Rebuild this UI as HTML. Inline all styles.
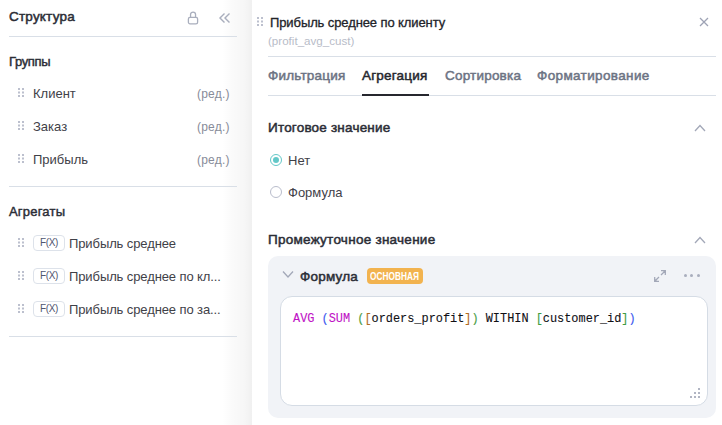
<!DOCTYPE html>
<html><head><meta charset="utf-8">
<style>
*{margin:0;padding:0;box-sizing:border-box}
html,body{width:722px;height:425px;overflow:hidden;background:#fff}
body{position:relative;font-family:"Liberation Sans",sans-serif;color:#2b2d36}
.a{position:absolute;white-space:nowrap;line-height:16px}
.b{font-weight:700}
.m{font-weight:400;-webkit-text-stroke-width:0.3px}
.sb{font-weight:400;font-size:13.5px;-webkit-text-stroke-width:0.5px;letter-spacing:0.2px}
.hl{position:absolute;height:1px;background:#d9dfe7}
.dots{position:absolute;width:6px;height:9px}
.dots i{position:absolute;width:2px;height:2px;background:#bcc0ce}
.shadow{position:absolute;left:222px;top:0;width:30px;height:425px;background:linear-gradient(to right,rgba(0,0,0,0) 0%,rgba(0,0,0,0.018) 35%,rgba(0,0,0,0.036) 75%,rgba(0,0,0,0.058) 100%)}
.red{color:#878c99;font-size:12px;letter-spacing:0.2px}
.fx{position:absolute;width:32px;height:16px;border:1px solid #dde2ea;border-radius:4px;font-size:10px;color:#4f5670;text-align:center;line-height:13.5px;letter-spacing:-0.3px}
.tab{font-size:13.5px;font-weight:400;-webkit-text-stroke-width:0.5px;letter-spacing:0.2px;color:#6c7383}
.radio{position:absolute;width:12px;height:12px;border-radius:50%}
</style></head><body>

<!-- LEFT PANEL -->
<div class="shadow"></div>
<div class="a sb" style="left:9px;top:9px;color:#2b2d36">Структура</div>
<!-- lock -->
<svg style="position:absolute;left:186px;top:10px" width="14" height="16" viewBox="0 0 14 16">
 <path d="M4.55 7.4V4.6a2.5 2.5 0 0 1 5 0V7.4" fill="none" stroke="#a9aebd" stroke-width="1.3"/>
 <rect x="2.4" y="7.4" width="9.2" height="6.45" rx="1.6" fill="none" stroke="#a9aebd" stroke-width="1.3"/>
</svg>
<!-- double chevron -->
<svg style="position:absolute;left:218px;top:12px" width="14" height="12" viewBox="0 0 14 12">
 <path d="M6.5 1.6L2 6l4.5 4.4M11.5 1.6L7 6l4.5 4.4" fill="none" stroke="#a9aebd" stroke-width="1.4"/>
</svg>
<div class="hl" style="left:9px;top:36px;width:228px"></div>

<div class="a m" style="left:9px;top:54px;font-size:13px;letter-spacing:-0.35px;-webkit-text-stroke-width:0.45px">Группы</div>

<div class="dots" style="left:18px;top:88px"><svg width="6" height="9" viewBox="0 0 6 9" style="display:block"><g fill="#bcc0ce"><rect x="0" y="0" width="2" height="2"/><rect x="4" y="0" width="2" height="2"/><rect x="0" y="3.5" width="2" height="2"/><rect x="4" y="3.5" width="2" height="2"/><rect x="0" y="7" width="2" height="2"/><rect x="4" y="7" width="2" height="2"/></g></svg></div>
<div class="a" style="left:33px;top:86px;font-size:13px;color:#3f4148">Клиент</div>
<div class="a red" style="left:197px;top:86px">(ред.)</div>

<div class="dots" style="left:18px;top:121px"><svg width="6" height="9" viewBox="0 0 6 9" style="display:block"><g fill="#bcc0ce"><rect x="0" y="0" width="2" height="2"/><rect x="4" y="0" width="2" height="2"/><rect x="0" y="3.5" width="2" height="2"/><rect x="4" y="3.5" width="2" height="2"/><rect x="0" y="7" width="2" height="2"/><rect x="4" y="7" width="2" height="2"/></g></svg></div>
<div class="a" style="left:33px;top:119px;font-size:13px;color:#3f4148">Заказ</div>
<div class="a red" style="left:197px;top:119px">(ред.)</div>

<div class="dots" style="left:18px;top:154px"><svg width="6" height="9" viewBox="0 0 6 9" style="display:block"><g fill="#bcc0ce"><rect x="0" y="0" width="2" height="2"/><rect x="4" y="0" width="2" height="2"/><rect x="0" y="3.5" width="2" height="2"/><rect x="4" y="3.5" width="2" height="2"/><rect x="0" y="7" width="2" height="2"/><rect x="4" y="7" width="2" height="2"/></g></svg></div>
<div class="a" style="left:33px;top:152px;font-size:13px;color:#3f4148">Прибыль</div>
<div class="a red" style="left:197px;top:152px">(ред.)</div>

<div class="hl" style="left:9px;top:186px;width:228px"></div>

<div class="a m" style="left:9px;top:204px;font-size:13px;letter-spacing:0.2px;-webkit-text-stroke-width:0.45px">Агрегаты</div>

<div class="dots" style="left:18px;top:238px"><svg width="6" height="9" viewBox="0 0 6 9" style="display:block"><g fill="#bcc0ce"><rect x="0" y="0" width="2" height="2"/><rect x="4" y="0" width="2" height="2"/><rect x="0" y="3.5" width="2" height="2"/><rect x="4" y="3.5" width="2" height="2"/><rect x="0" y="7" width="2" height="2"/><rect x="4" y="7" width="2" height="2"/></g></svg></div>
<div class="fx" style="left:33px;top:235px">F(X)</div>
<div class="a" style="left:69px;top:236px;font-size:13px;color:#3f4148;letter-spacing:-0.1px">Прибыль среднее</div>

<div class="dots" style="left:18px;top:271px"><svg width="6" height="9" viewBox="0 0 6 9" style="display:block"><g fill="#bcc0ce"><rect x="0" y="0" width="2" height="2"/><rect x="4" y="0" width="2" height="2"/><rect x="0" y="3.5" width="2" height="2"/><rect x="4" y="3.5" width="2" height="2"/><rect x="0" y="7" width="2" height="2"/><rect x="4" y="7" width="2" height="2"/></g></svg></div>
<div class="fx" style="left:33px;top:268px">F(X)</div>
<div class="a" style="left:69px;top:269px;font-size:13px;color:#3f4148;letter-spacing:-0.1px">Прибыль среднее по кл...</div>

<div class="dots" style="left:18px;top:304px"><svg width="6" height="9" viewBox="0 0 6 9" style="display:block"><g fill="#bcc0ce"><rect x="0" y="0" width="2" height="2"/><rect x="4" y="0" width="2" height="2"/><rect x="0" y="3.5" width="2" height="2"/><rect x="4" y="3.5" width="2" height="2"/><rect x="0" y="7" width="2" height="2"/><rect x="4" y="7" width="2" height="2"/></g></svg></div>
<div class="fx" style="left:33px;top:301px">F(X)</div>
<div class="a" style="left:69px;top:302px;font-size:13px;color:#3f4148;letter-spacing:-0.1px">Прибыль среднее по за...</div>

<div class="hl" style="left:9px;top:336px;width:228px"></div>

<!-- RIGHT PANEL -->
<div class="dots" style="left:257px;top:17px"><svg width="6" height="9" viewBox="0 0 6 9" style="display:block"><g fill="#bcc0ce"><rect x="0" y="0" width="2" height="2"/><rect x="4" y="0" width="2" height="2"/><rect x="0" y="3.5" width="2" height="2"/><rect x="4" y="3.5" width="2" height="2"/><rect x="0" y="7" width="2" height="2"/><rect x="4" y="7" width="2" height="2"/></g></svg></div>
<div class="a m" style="left:270px;top:15px;font-size:13px;letter-spacing:-0.1px;color:#222329;-webkit-text-stroke-color:#222329">Прибыль среднее по клиенту</div>
<svg style="position:absolute;left:699px;top:17px" width="10" height="10" viewBox="0 0 10 10">
 <path d="M1 1L9 9M9 1L1 9" stroke="#9ea3b5" stroke-width="1.3"/>
</svg>
<div class="a" style="left:268px;top:33px;font-size:11.6px;color:#b8bcc8">(profit_avg_cust)</div>
<div class="hl" style="left:268px;top:56px;width:448px"></div>

<div class="a tab" style="left:268px;top:67.5px">Фильтрация</div>
<div class="a tab" style="left:362px;top:67.5px;color:#26272e">Агрегация</div>
<div class="a tab" style="left:445px;top:67.5px">Сортировка</div>
<div class="a tab" style="left:537px;top:67.5px;letter-spacing:0.37px">Форматирование</div>
<div class="hl" style="left:268px;top:95px;width:448px"></div>
<div style="position:absolute;left:362px;top:94px;width:67px;height:2px;background:#26272e"></div>

<div class="a sb" style="left:268px;top:120px">Итоговое значение</div>
<svg style="position:absolute;left:694px;top:124px" width="12" height="8" viewBox="0 0 12 8">
 <path d="M1 7L6 1.5L11 7" fill="none" stroke="#a3a8b8" stroke-width="1.3"/>
</svg>

<div class="radio" style="left:270px;top:154px;border:1px solid #63c8c8;background:#fff"><div style="position:absolute;left:2px;top:2px;width:6px;height:6px;border-radius:50%;background:#63c8c8"></div></div>
<div class="a" style="left:288px;top:153px;font-size:13px;color:#3f4148">Нет</div>
<div class="radio" style="left:270px;top:186px;border:1px solid #b9bdcc;background:#fff"></div>
<div class="a" style="left:288px;top:185px;font-size:13px;color:#3f4148">Формула</div>

<div class="a sb" style="left:268px;top:232px;letter-spacing:0.26px">Промежуточное значение</div>
<svg style="position:absolute;left:694px;top:236px" width="12" height="8" viewBox="0 0 12 8">
 <path d="M1 7L6 1.5L11 7" fill="none" stroke="#a3a8b8" stroke-width="1.3"/>
</svg>

<div style="position:absolute;left:268px;top:256px;width:448px;height:162px;background:#f1f3f7;border-radius:10px"></div>
<svg style="position:absolute;left:282px;top:270px" width="12" height="9" viewBox="0 0 12 9">
 <path d="M1 1.5L6 7L11 1.5" fill="none" stroke="#a3a8b8" stroke-width="1.3"/>
</svg>
<div class="a sb" style="left:300px;top:269px">Формула</div>
<div style="position:absolute;left:367px;top:268px;width:56px;height:16px;background:#f2b34f;border-radius:4px"></div>
<div class="a b" style="left:370px;top:269px;font-size:10px;color:#fff;transform-origin:0 0;transform:scaleX(0.83)">ОСНОВНАЯ</div>

<!-- expand icon -->
<svg style="position:absolute;left:653px;top:269px" width="14" height="14" viewBox="0 0 14 14">
 <path d="M8 1.7H12.3V6M12.3 1.7L8 6M6 12.3H1.7V8M1.7 12.3L6 8" fill="none" stroke="#a3a8b8" stroke-width="1.25"/><path d="M9.5 1.2H12.8V4.5ZM4.5 12.8H1.2V9.5Z" fill="#a3a8b8"/>
</svg>
<div style="position:absolute;left:684px;top:274px;width:3px;height:3px;border-radius:50%;background:#a9aebd"></div>
<div style="position:absolute;left:690.2px;top:274.2px;width:3px;height:3px;border-radius:50%;background:#a9aebd"></div>
<div style="position:absolute;left:697px;top:274px;width:3px;height:3px;border-radius:50%;background:#a9aebd"></div>

<div style="position:absolute;left:280px;top:296px;width:428px;height:110px;background:#fff;border:1px solid #d5dce5;border-radius:12px"></div>
<div class="a" style="left:293px;top:311px;font-family:'Liberation Mono',monospace;font-size:11.9px;color:#101014;-webkit-text-stroke-width:0.1px"><span style="color:#c012c6">AVG</span> <span style="color:#3d5af0">(</span><span style="color:#c012c6">SUM</span> <span style="color:#4a9e48">(</span><span style="color:#b06c22">[</span>orders_profit<span style="color:#b06c22">]</span><span style="color:#4a9e48">)</span> WITHIN <span style="color:#3f9c3f">[</span>customer_id<span style="color:#3f9c3f">]</span><span style="color:#3d5af0">)</span></div>
<!-- resize grip -->
<div style="position:absolute;left:698px;top:388px;width:2px;height:2px;background:#b1b5c3"></div><div style="position:absolute;left:694px;top:392px;width:2px;height:2px;background:#b1b5c3"></div><div style="position:absolute;left:698px;top:392px;width:2px;height:2px;background:#b1b5c3"></div><div style="position:absolute;left:690px;top:396px;width:2px;height:2px;background:#b1b5c3"></div><div style="position:absolute;left:694px;top:396px;width:2px;height:2px;background:#b1b5c3"></div><div style="position:absolute;left:698px;top:396px;width:2px;height:2px;background:#b1b5c3"></div>
</body></html>
